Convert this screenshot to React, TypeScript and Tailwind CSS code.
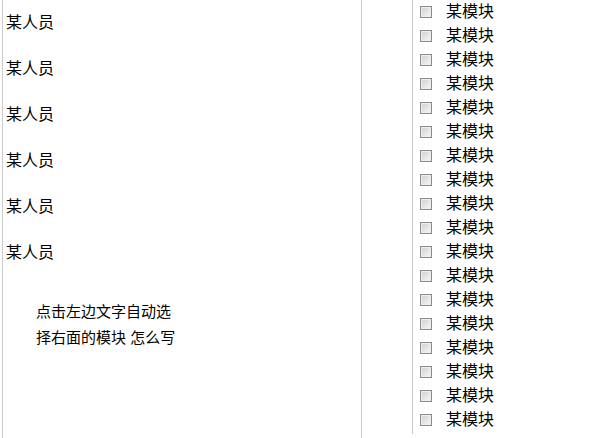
const people = Array.from({ length: 6 }, (_, i) => i);
const modules = Array.from({ length: 18 }, (_, i) => i);

function Box() {
  return (
    <span className="block h-[12px] w-[12px] border border-[#8a8a8a] bg-gradient-to-br from-[#cfcfcf] to-[#f8f8f8] shadow-[inset_0_0_0_1px_#efefef]" />
  );
}

export default function App() {
  return (
    <div
      className="flex h-[438px] w-[605px] overflow-hidden bg-white pl-[2px] text-black"
      style={{ fontFamily: '"Liberation Sans", "Noto Sans CJK SC", sans-serif' }}
    >
      <div className="h-full w-[360px] border-x border-[#cccccc] pl-[3px] pt-[13px]">
        <div className="flex flex-col gap-[26px]">
          {people.map((i) => (
            <div key={i} className="text-[16px] leading-[20px]">
              某人员
            </div>
          ))}
        </div>
        <p className="mt-[36px] w-[140px] pl-[30px] text-[15px] leading-[26px] box-content">
          点击左边文字自动选择右面的模块 怎么写
        </p>
      </div>
      <div className="w-[50px]" />
      <div className="h-[434px] flex-1 border-l border-[#cccccc] pl-[7px]">
        {modules.map((i) => (
          <label key={i} className="flex h-[24px] items-center gap-[14px]">
            <Box />
            <span className="text-[16px] leading-[20px]">某模块</span>
          </label>
        ))}
      </div>
    </div>
  );
}
